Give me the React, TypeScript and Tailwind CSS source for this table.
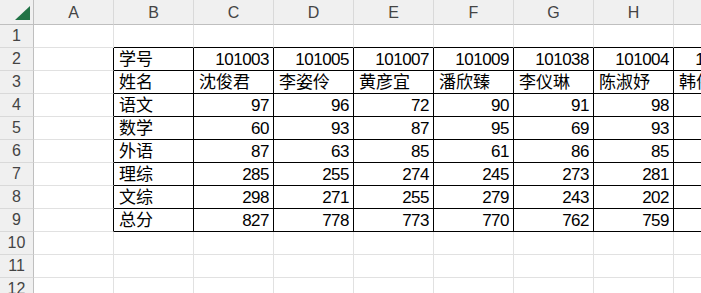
import React from 'react';

const COLS = ['A', 'B', 'C', 'D', 'E', 'F', 'G', 'H', 'I'];
const ROW_COUNT = 12;

type Cell = string | number | null;

// sheet contents, keyed by row number; index 0 = column A
const sheet: Record<number, Cell[]> = {
  2: [null, '学号', 101003, 101005, 101007, 101009, 101038, 101004, 101012],
  3: [null, '姓名', '沈俊君', '李姿伶', '黄彦宜', '潘欣臻', '李仪琳', '陈淑妤', '韩伟杰'],
  4: [null, '语文', 97, 96, 72, 90, 91, 98, 88],
  5: [null, '数学', 60, 93, 87, 95, 69, 93, 79],
  6: [null, '外语', 87, 63, 85, 61, 86, 85, 90],
  7: [null, '理综', 285, 255, 274, 245, 273, 281, 262],
  8: [null, '文综', 298, 271, 255, 279, 243, 202, 250],
  9: [null, '总分', 827, 778, 773, 770, 762, 759, 769],
};

const inTableRow = (r: number) => r >= 2 && r <= 9;

function DataCell({ row, col }: { row: number; col: number }) {
  const value = sheet[row]?.[col] ?? null;
  const isNumber = typeof value === 'number';
  // col index: 0 = A ... 8 = I. The table spans B2:I9, so column A's right
  // edge and row 1's bottom edge are its outer border too.
  const rightBlack = inTableRow(row);
  const bottomBlack = col >= 1 && row >= 1 && row <= 9;

  return (
    <div
      className={`flex items-end overflow-hidden whitespace-nowrap border-r border-b pb-[2px] ${
        isNumber ? 'justify-end pr-[4px]' : 'pl-[5px]'
      } ${rightBlack ? 'border-r-black' : 'border-r-[#e1e1e1]'} ${
        bottomBlack ? 'border-b-black' : 'border-b-[#e1e1e1]'
      }`}
    >
      {value !== null && (
        <span className={`text-[17px] leading-[17px] text-black ${isNumber ? 'tracking-[-0.5px]' : ''}`}>
          {value}
        </span>
      )}
    </div>
  );
}

export default function App() {
  const rows = Array.from({ length: ROW_COUNT }, (_, i) => i + 1);

  return (
    <div
      className="w-[701px] h-[293px] overflow-hidden bg-white"
      style={{ fontFamily: '"Liberation Sans", "Noto Sans CJK SC", sans-serif' }}
    >
      <div className="grid grid-cols-[34px_repeat(9,80px)] grid-rows-[25px_repeat(12,23px)] w-max">
        {/* select-all corner */}
        <div className="relative bg-[#f0f0f0] border-r border-b border-r-[#bfbfbf] border-b-[#bfbfbf]">
          <svg className="absolute inset-0" width="33" height="24" viewBox="0 0 33 24">
            <polygon points="15,20 30,20 30,6" fill="#217346" />
          </svg>
        </div>
        {COLS.map((c) => (
          <div
            key={c}
            className="flex items-center justify-center bg-[#f0f0f0] border-r border-b border-r-[#d9d9d9] border-b-[#bfbfbf] text-[16px] text-[#444] pt-[1px]"
          >
            {c}
          </div>
        ))}

        {rows.map((r) => (
          <React.Fragment key={r}>
            <div className="flex items-center justify-center bg-[#f0f0f0] border-r border-b border-r-[#bfbfbf] border-b-[#d9d9d9] text-[16px] text-[#444]">
              {r}
            </div>
            {COLS.map((_, ci) => (
              <DataCell key={ci} row={r} col={ci} />
            ))}
          </React.Fragment>
        ))}
      </div>
    </div>
  );
}
